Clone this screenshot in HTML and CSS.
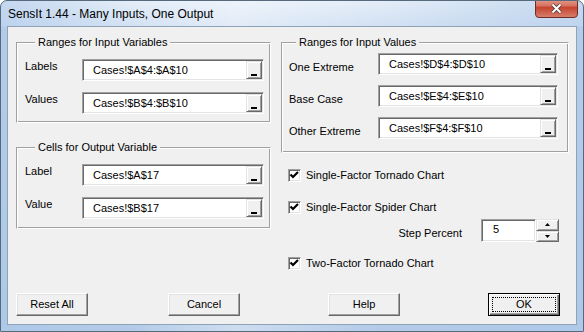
FILE: index.html
```html
<!DOCTYPE html>
<html>
<head>
<meta charset="utf-8">
<link rel="stylesheet" href="styles.css">
</head>
<body>
<div class="window">
  <div class="titlebar">
    <span class="title">SensIt 1.44 - Many Inputs, One Output</span>
    <div class="close">
      <svg width="43" height="18" viewBox="0 0 43 18">
        <defs>
          <linearGradient id="cg" x1="0" y1="0" x2="0" y2="1">
            <stop offset="0" stop-color="#eab0a2"/>
            <stop offset="0.45" stop-color="#d97664"/>
            <stop offset="0.55" stop-color="#c5442e"/>
            <stop offset="1" stop-color="#d9806f"/>
          </linearGradient>
        </defs>
        <rect x="0.5" y="-4.5" width="42" height="22" rx="3.5" fill="url(#cg)" stroke="#6e2e25"/>
        <path d="M17.5 4.5 L25.5 12.5 M25.5 4.5 L17.5 12.5" stroke="#4a3a38" stroke-width="3.6"/>
        <path d="M17.5 4.5 L25.5 12.5 M25.5 4.5 L17.5 12.5" stroke="#ffffff" stroke-width="2"/>
      </svg>
    </div>
  </div>
  <div class="client">
    <div class="cols">
      <div class="col-left">
        <div class="group g1">
          <div class="legend lg-left">Ranges for Input Variables</div>
          <div class="fields f-left">
            <span class="lbl">Labels</span>
            <div class="ref"><span class="reftext">Cases!$A$4:$A$10</span><span class="refbtn"></span></div>
            <span class="lbl">Values</span>
            <div class="ref"><span class="reftext">Cases!$B$4:$B$10</span><span class="refbtn"></span></div>
          </div>
        </div>
        <div class="group g2">
          <div class="legend lg-left">Cells for Output Variable</div>
          <div class="fields f-left">
            <span class="lbl">Label</span>
            <div class="ref"><span class="reftext">Cases!$A$17</span><span class="refbtn"></span></div>
            <span class="lbl">Value</span>
            <div class="ref"><span class="reftext">Cases!$B$17</span><span class="refbtn"></span></div>
          </div>
        </div>
      </div>
      <div class="col-right">
        <div class="group g3">
          <div class="legend lg-right">Ranges for Input Values</div>
          <div class="fields f-right">
            <span class="lbl lbl-low">One Extreme</span>
            <div class="ref"><span class="reftext">Cases!$D$4:$D$10</span><span class="refbtn"></span></div>
            <span class="lbl lbl-low">Base Case</span>
            <div class="ref"><span class="reftext">Cases!$E$4:$E$10</span><span class="refbtn"></span></div>
            <span class="lbl lbl-low">Other Extreme</span>
            <div class="ref"><span class="reftext">Cases!$F$4:$F$10</span><span class="refbtn"></span></div>
          </div>
        </div>
        <div class="check c1">
          <span class="cb"><svg width="11" height="11" viewBox="0 0 11 11"><polyline points="1.5,4.5 4,7 9,2" fill="none" stroke="#000" stroke-width="2.2"/></svg></span>
          <span>Single-Factor Tornado Chart</span>
        </div>
        <div class="check c2">
          <span class="cb"><svg width="11" height="11" viewBox="0 0 11 11"><polyline points="1.5,4.5 4,7 9,2" fill="none" stroke="#000" stroke-width="2.2"/></svg></span>
          <span>Single-Factor Spider Chart</span>
        </div>
        <div class="step">
          <span class="steplbl">Step Percent</span>
          <div class="num">5</div>
          <div class="spin">
            <span class="sbtn"><svg width="5" height="3" viewBox="0 0 5 3"><polygon points="2.5,0 5,3 0,3" fill="#000"/></svg></span>
            <span class="sbtn"><svg width="5" height="3" viewBox="0 0 5 3"><polygon points="0,0 5,0 2.5,3" fill="#000"/></svg></span>
          </div>
        </div>
        <div class="check c3">
          <span class="cb"><svg width="11" height="11" viewBox="0 0 11 11"><polyline points="1.5,4.5 4,7 9,2" fill="none" stroke="#000" stroke-width="2.2"/></svg></span>
          <span>Two-Factor Tornado Chart</span>
        </div>
      </div>
    </div>
    <div class="buttons">
      <div class="btn b-reset">Reset All</div>
      <div class="btn b-cancel">Cancel</div>
      <div class="btn b-help">Help</div>
      <div class="btn b-ok default"><span class="focus">OK</span></div>
    </div>
  </div>
</div>
</body>
</html>
```

FILE: styles.css
```css
* { box-sizing: border-box; }
body {
  margin: 0;
  font-family: "Liberation Sans", Arial, sans-serif;
  font-size: 11px;
  color: #000;
  background: #fff;
}
.window {
  width: 584px;
  height: 332px;
  border: 1px solid #56697d;
  border-radius: 7px 7px 0 0;
  background:
    linear-gradient(to right, rgba(170,198,232,0.55) 0%, rgba(255,255,255,0) 22%, rgba(255,255,255,0.35) 40%, rgba(255,255,255,0) 65%, rgba(170,198,232,0.5) 100%),
    linear-gradient(to bottom, #e4edf8 0px, #d2e1f3 25px, #bcd2ec 26px, #b3cbe8 100%);
  padding: 0 6px 6px 6px;
  display: flex;
  flex-direction: column;
  overflow: hidden;
}
.titlebar {
  height: 25px;
  flex: none;
  display: flex;
  justify-content: space-between;
  align-items: flex-start;
}
.title {
  font-size: 12px;
  line-height: 14px;
  padding: 6px 0 0 1px;
  color: #000;
}
.close {
  width: 43px;
  height: 18px;
  margin-top: -1px;
  margin-right: -1px;
}
.close svg { display: block; }
.client {
  flex: 1;
  background: #f0f0f0;
  border: 1px solid #8fa3b8;
  padding: 15px 7px 8px 8px;
  display: flex;
  flex-direction: column;
}
.cols {
  display: flex;
  gap: 10px;
}
.col-left {
  width: 255px;
  display: flex;
  flex-direction: column;
  gap: 24px;
}
.col-right {
  width: 288px;
  display: flex;
  flex-direction: column;
}
.group {
  border: 1px solid;
  border-color: #a0a0a0 #fff #fff #a0a0a0;
  box-shadow: inset 1px 1px 0 #fff, inset -1px -1px 0 #a0a0a0;
  line-height: 13px;
}
.g1 { padding: 0 5px 8px 8px; }
.g2 { padding: 0 5px 9px 8px; }
.g3 { padding: 0 9px 13px 7px; }
.legend {
  display: block;
  width: fit-content;
  margin-top: -7px;
  padding: 0 3px;
  line-height: 13px;
  background: #f0f0f0;
}
.lg-left { margin-left: 10px; }
.lg-right { margin-left: 7px; }
.fields {
  display: grid;
  align-items: start;
}
.f-left {
  grid-template-columns: 57px 182px;
  row-gap: 11px;
  margin-top: 10px;
}
.f-right {
  grid-template-columns: 89px 180px;
  row-gap: 10px;
  margin-top: 4px;
}
.lbl {
  line-height: 13px;
  padding-top: 1px;
  white-space: nowrap;
}
.lbl-low { padding-top: 8px; }
.ref {
  height: 22px;
  background: #fff;
  border: 1px solid;
  border-color: #a0a0a0 #fff #fff #a0a0a0;
  box-shadow: inset 1px 1px 0 #696969, inset -1px -1px 0 #e3e3e3;
  display: flex;
  align-items: center;
  padding-left: 10px;
}
.reftext {
  flex: 1;
  white-space: nowrap;
  line-height: 13px;
}
.refbtn {
  width: 16px;
  align-self: stretch;
  margin: 1px 1px 1px 0;
  background: #f0f0f0;
  border: 1px solid;
  border-color: #e3e3e3 #696969 #696969 #e3e3e3;
  box-shadow: inset 1px 1px 0 #fff, inset -1px -1px 0 #a0a0a0;
  display: flex;
  justify-content: center;
  align-items: flex-end;
  padding-bottom: 2px;
}
.refbtn::after {
  content: "";
  width: 6px;
  height: 2px;
  background: #000;
}
.check {
  display: flex;
  align-items: center;
  gap: 5px;
  height: 13px;
  line-height: 13px;
  padding-left: 7px;
  white-space: nowrap;
}
.c1 { margin-top: 16px; }
.c2 { margin-top: 19px; }
.c3 { margin-top: 15px; }
.cb {
  width: 13px;
  height: 13px;
  flex: none;
  background: #fff;
  border: 1px solid;
  border-color: #a0a0a0 #fff #fff #a0a0a0;
  box-shadow: inset 1px 1px 0 #696969, inset -1px -1px 0 #e3e3e3;
}
.cb svg { display: block; }
.step {
  display: flex;
  justify-content: flex-end;
  align-items: flex-start;
  margin-top: 5px;
  padding-right: 10px;
}
.steplbl {
  line-height: 13px;
  padding-top: 8px;
  margin-right: 19px;
  white-space: nowrap;
}
.num {
  width: 55px;
  height: 23px;
  background: #fff;
  border: 1px solid;
  border-color: #a0a0a0 #fff #fff #a0a0a0;
  box-shadow: inset 1px 1px 0 #696969, inset -1px -1px 0 #e3e3e3;
  padding: 3px 0 0 11px;
  line-height: 13px;
}
.spin {
  width: 23px;
  height: 23px;
  display: flex;
  flex-direction: column;
}
.sbtn {
  flex: 1;
  background: #f0f0f0;
  border: 1px solid;
  border-color: #e3e3e3 #696969 #696969 #e3e3e3;
  box-shadow: inset 1px 1px 0 #fff, inset -1px -1px 0 #a0a0a0;
  display: flex;
  align-items: center;
  justify-content: center;
}
.sbtn svg { display: block; }
.buttons {
  margin-top: auto;
  display: flex;
}
.btn {
  width: 72px;
  height: 23px;
  background: #f0f0f0;
  border: 1px solid;
  border-color: #fff #696969 #696969 #fff;
  box-shadow: inset -1px -1px 0 #a0a0a0, inset 1px 1px 0 #e3e3e3;
  display: flex;
  align-items: center;
  justify-content: center;
  line-height: 13px;
}
.b-cancel { margin-left: 80px; }
.b-help { margin-left: 88px; }
.b-ok { margin-left: 88px; }
.default {
  border: 1px solid #000;
  box-shadow: inset 1px 1px 0 #fff, inset -1px -1px 0 #696969, inset -2px -2px 0 #a0a0a0;
  padding: 3px;
}
.focus {
  flex: 1;
  align-self: stretch;
  display: flex;
  align-items: center;
  justify-content: center;
  border: 1px dotted #000;
}
```
